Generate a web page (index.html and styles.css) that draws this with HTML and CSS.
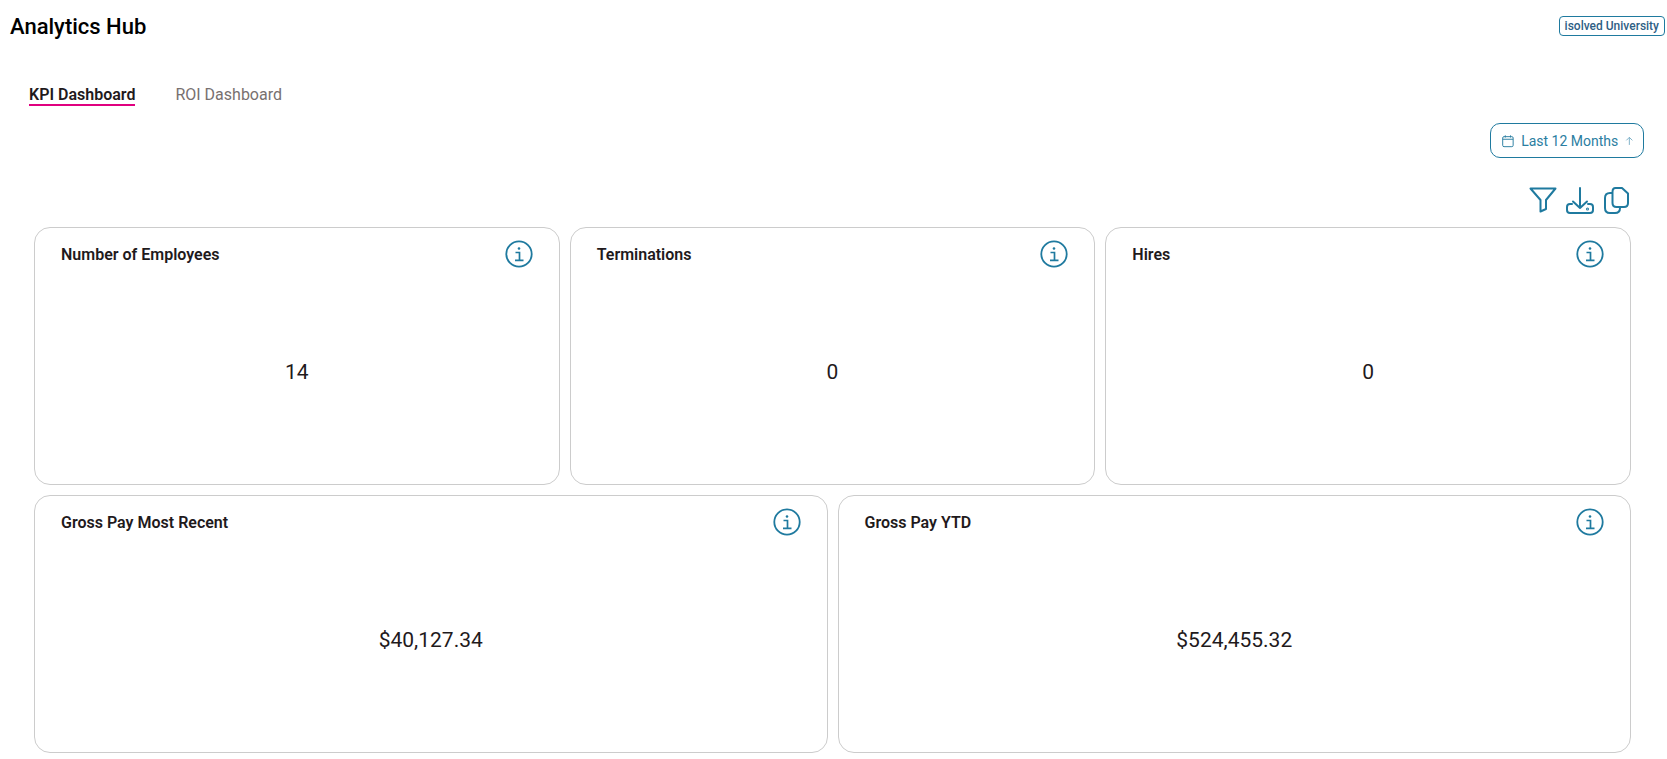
FILE: index.html
```html
<!DOCTYPE html>
<html lang="en">
<head>
  <meta charset="UTF-8" />
  <title>Analytics Hub</title>
  <link rel="stylesheet" href="styles.css">
</head>
<body>
  <header class="top-bar">
    <h1 class="page-title">Analytics Hub</h1>
    <a class="university-link" href="#">isolved University</a>
  </header>

  <nav class="tabs">
    <a class="tab active" href="#">KPI Dashboard</a>
    <a class="tab" href="#">ROI Dashboard</a>
  </nav>

  <div class="range-row">
    <button class="range-button">
      <svg class="range-icon" viewBox="0 0 14 14" fill="none" stroke="currentColor" stroke-width="1.100">
        <rect x="0.800" y="2" width="12" height="11.500" rx="1.500" />
        <path d="M0.800 5h12M3.800 0.500v2.500M9.800 0.500v2.500" />
      </svg>
      <span>Last 12 Months</span>
      <svg class="range-arrow" viewBox="0 0 10 10" fill="none" stroke="currentColor" stroke-width="1">
        <path d="M5 9.500V0.800M1.500 4.300L5 0.800l3.500 3.500" />
      </svg>
    </button>
  </div>

  <div class="actions">
    <svg class="filter-icon" viewBox="0 0 28 26" fill="none" stroke="currentColor" stroke-width="2" stroke-linejoin="round">
      <path d="M1.500 1.500h25L17 13v9l-5.500 2.500V13z" />
    </svg>
    <svg class="download-icon" viewBox="0 0 28 27" fill="none" stroke="currentColor" stroke-width="2" stroke-linecap="round" stroke-linejoin="round">
      <path d="M14 1v20M7 14.500l7 6.500 7-6.500" />
      <path d="M6 17H4q-3 0-3 3v3q0 3 3 3h20q3 0 3-3v-3q0-3-3-3h-2" />
      <circle cx="21.500" cy="22" r="0.500" />
    </svg>
    <svg class="copy-icon" viewBox="0 0 25 27" fill="none" stroke="currentColor" stroke-width="2" stroke-linejoin="round">
      <path d="M11.500 1H18l6 5.500V16q0 4-4 4h-7.500q-4 0-4-4V5q0-4 3-4z" />
      <path d="M8.500 6H6Q1 6 1 11v10q0 5 5 5h5q5 0 5-5v-1" />
    </svg>
  </div>

  <main class="dashboard">
    <div class="card-row">
      <section class="card">
        <div class="card-head">
          <h2>Number of Employees</h2>
          <svg class="info-icon" viewBox="0 0 28 28"><use href="#info" /></svg>
        </div>
        <div class="card-value">14</div>
      </section>
      <section class="card">
        <div class="card-head">
          <h2>Terminations</h2>
          <svg class="info-icon" viewBox="0 0 28 28"><use href="#info" /></svg>
        </div>
        <div class="card-value">0</div>
      </section>
      <section class="card">
        <div class="card-head">
          <h2>Hires</h2>
          <svg class="info-icon" viewBox="0 0 28 28"><use href="#info" /></svg>
        </div>
        <div class="card-value">0</div>
      </section>
    </div>
    <div class="card-row">
      <section class="card">
        <div class="card-head">
          <h2>Gross Pay Most Recent</h2>
          <svg class="info-icon" viewBox="0 0 28 28"><use href="#info" /></svg>
        </div>
        <div class="card-value">$40,127.34</div>
      </section>
      <section class="card">
        <div class="card-head">
          <h2>Gross Pay YTD</h2>
          <svg class="info-icon" viewBox="0 0 28 28"><use href="#info" /></svg>
        </div>
        <div class="card-value">$524,455.32</div>
      </section>
    </div>
  </main>

  <!-- shared info icon -->
  <svg class="icon-defs" width="0" height="0">
    <symbol id="info" viewBox="0 0 28 28">
      <circle cx="14" cy="14" r="12.700" fill="none" stroke="currentColor" stroke-width="1.800" />
      <circle cx="14" cy="8.500" r="1.300" fill="currentColor" />
      <path d="M10.500 12.500H14.500V20M10 20.300h8.500" fill="none" stroke="currentColor" stroke-width="1.700" />
    </symbol>
  </svg>
</body>
</html>
```

FILE: styles.css
```css
* {
  box-sizing: border-box;
}

body {
  margin: 0;
  background: #fff;
  color: #1f1a1c;
  font-family: 'Roboto', sans-serif;
  height: 759px;
  overflow: hidden;
}

.top-bar {
  display: flex;
  justify-content: space-between;
  align-items: flex-start;
  padding: 15px 2px 0 10px;
  height: 70px;
}

.page-title {
  margin: 0;
  font-size: 22px;
  line-height: 24px;
  font-weight: 500;
  color: #000;
}

.university-link {
  margin-top: 1px;
  padding: 0 5px;
  height: 20px;
  line-height: 18px;
  font-size: 12px;
  font-weight: 500;
  color: #2f5f85;
  text-decoration: none;
  border: 1px solid #1f7a9f;
  border-radius: 4px;
}

.tabs {
  display: flex;
  gap: 40px;
  padding-left: 29px;
  height: 36px;
}

.tab {
  height: 36px;
  padding-top: 16px;
  font-size: 16px;
  line-height: 18px;
  color: #77706f;
  text-decoration: none;
}

.tab.active {
  color: #1f1a1c;
  font-weight: 600;
  box-shadow: inset 0 -2px 0 #e0007f;
}

.range-row {
  display: flex;
  justify-content: flex-end;
  padding-right: 23px;
  margin-top: 17px;
}

.range-button {
  display: flex;
  align-items: center;
  gap: 7px;
  width: 154px;
  height: 35px;
  padding: 0 9px 0 11px;
  background: #fff;
  color: #2b7ea1;
  font-family: inherit;
  font-size: 14px;
  white-space: nowrap;
  border: 1px solid #1f7a9f;
  border-radius: 10px;
}

.range-icon {
  width: 14px;
  height: 14px;
}

.range-arrow {
  width: 10px;
  height: 10px;
  color: #6fa9c2;
}

.actions {
  display: flex;
  justify-content: flex-end;
  align-items: flex-end;
  height: 30px;
  margin-top: 27px;
  padding-right: 38px;
  color: #1f7a9f;
}

.filter-icon {
  width: 28px;
  height: 26px;
  margin: 0 9px 2px 0;
}

.download-icon {
  width: 28px;
  height: 27px;
  margin: 0 10px 1px 0;
}

.copy-icon {
  width: 25px;
  height: 27px;
  margin-bottom: 1px;
}

.dashboard {
  display: flex;
  flex-direction: column;
  gap: 10px;
  margin: 12px 36px 0 34px;
}

.card-row {
  display: flex;
  gap: 10px;
}

.card {
  flex: 1 1 0;
  display: flex;
  flex-direction: column;
  height: 258px;
  padding: 13px 26px 0 26px;
  border: 1px solid #cccccc;
  border-radius: 16px;
}

.card-head {
  display: flex;
  justify-content: space-between;
  align-items: flex-start;
}

.card-head h2 {
  margin: 0;
  padding-top: 4px;
  font-size: 16px;
  line-height: 20px;
  font-weight: 600;
  color: #1f1a1c;
}

.info-icon {
  width: 28px;
  height: 28px;
  margin-top: -1px;
  color: #1f7a9f;
}

.card-value {
  flex: 1;
  display: flex;
  align-items: center;
  justify-content: center;
  margin: 0 -26px;
  padding-bottom: 9px;
  font-size: 21px;
  color: #1f1a1c;
}

.icon-defs {
  position: absolute;
}
```
